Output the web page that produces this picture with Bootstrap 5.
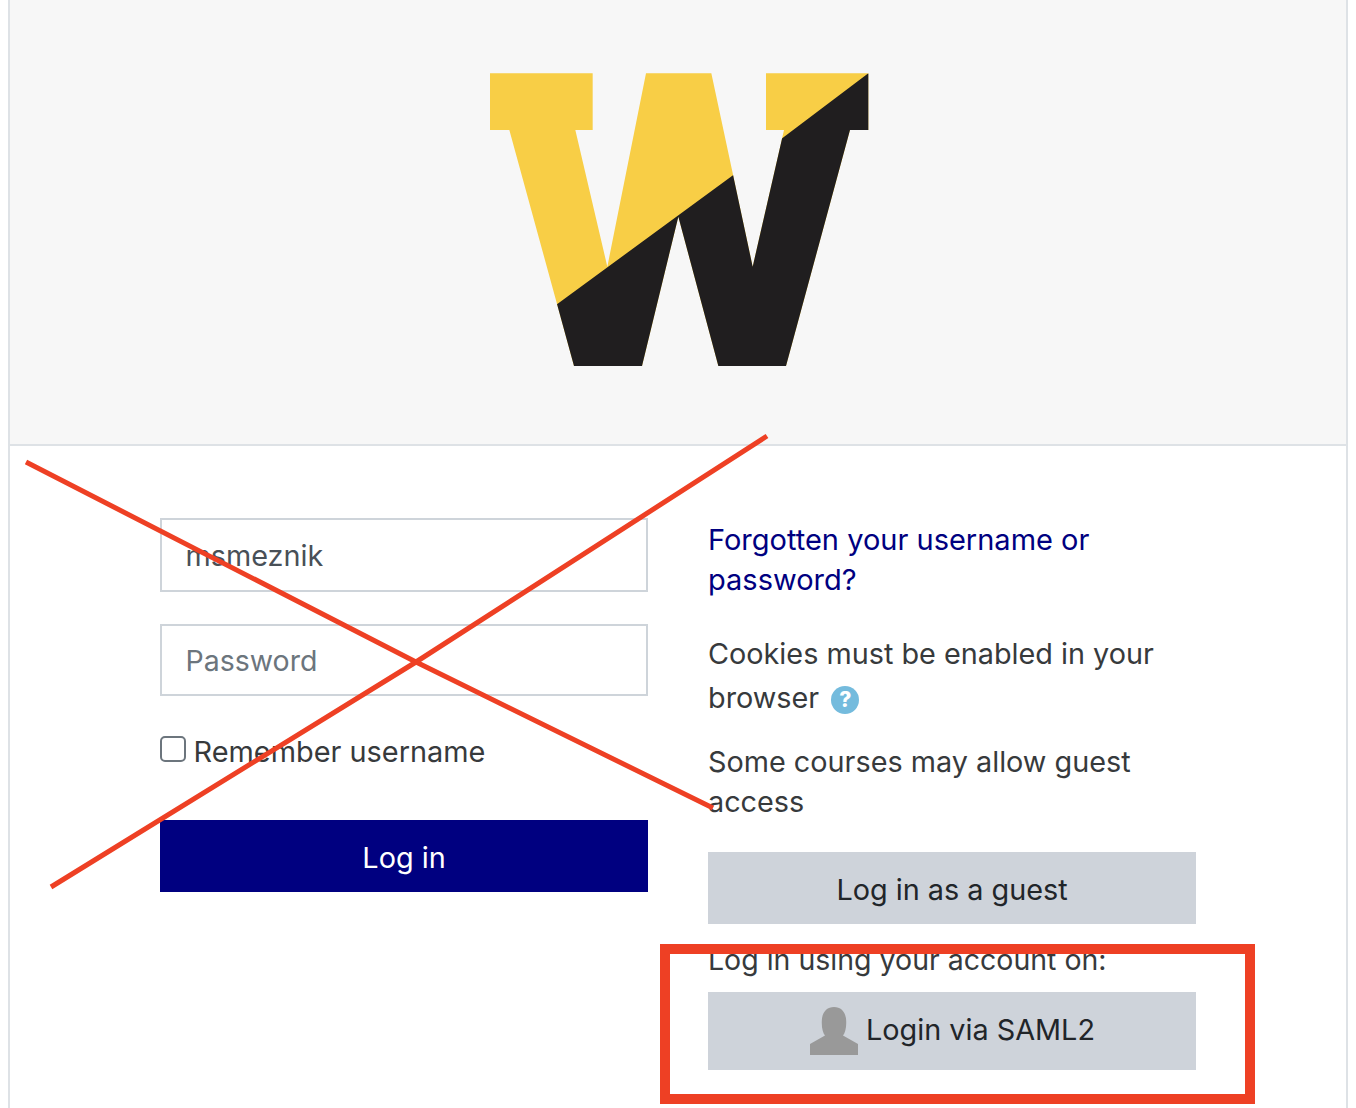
<!DOCTYPE html>
<html>
<head>
    <meta charset="UTF-8">
    <title>Log in</title>
    <link rel="stylesheet" href="https://cdn.jsdelivr.net/npm/bootstrap@5.3.3/dist/css/bootstrap.min.css">
    <style>
        html, body {
            height: 1108px;
            overflow: hidden;
        }
        body {
            position: relative;
            font-family: Inter, "Liberation Sans", sans-serif;
            font-size: 28.8px;
            line-height: 40px;
            color: #373a3c;
        }
        .login-frame {
            margin: 0 8px;
            height: 1108px;
            border-left: 2px solid #dee2e6;
            border-right: 2px solid #dee2e6;
        }
        .login-head {
            height: 446px;
            padding: 50px 0 0 4px;
            background: #f7f7f7;
            border-bottom: 2px solid #dee2e6;
        }
        .login-body {
            padding-left: 150px;
            gap: 60px;
        }
        .login-col {
            width: 488px;
        }
        .left-col {
            padding-top: 72px;
        }
        .right-col {
            padding-top: 74px;
        }
        .login-field.form-control {
            height: 74px;
            padding: 1px 23.500px 0;
            font-size: 28.800px;
            color: #495057;
            background: #fff;
            border: 2px solid #ced4da;
            border-radius: 0;
        }
        .login-field + .login-field {
            height: 72px;
            margin-top: 32px;
        }
        .login-field.form-control::placeholder {
            font-size: 28.500px;
            color: #6c757d;
            opacity: 1;
        }
        .remember-row {
            margin-top: 36px;
            gap: 7.500px;
        }
        .remember-row label {
            font-size: 28.900px;
        }
        .remember-row .form-check-input {
            width: 26px;
            height: 26px;
            margin: -6px 0 0;
            border: 2px solid #6c757d;
            border-radius: 5px;
        }
        .wide-btn.btn {
            display: block;
            width: 100%;
            height: 72px;
            padding: 3px 0 0;
            font-size: 28.800px;
            line-height: 70px;
            border: 0;
            border-radius: 0;
        }
        .wide-btn.btn-login {
            margin-top: 48px;
            color: #fff;
            background: #000080;
        }
        .btn-login:hover {
            color: #fff;
            background: #000080;
        }
        .wide-btn.btn-grey {
            margin-top: 30px;
            color: #212529;
            background: #ced3da;
        }
        .forgot-link {
            display: block;
            font-size: 29px;
            color: #000080;
            text-decoration: none;
        }
        .cookie-text {
            margin: 32px 0 0;
            line-height: 44px;
        }
        .guest-text {
            margin: 22px 0 0;
        }
        .help-mark {
            display: inline-flex;
            width: 28px;
            height: 28px;
            margin-left: 4px;
            font-size: 21px;
            font-weight: 800;
            line-height: 1;
            color: #fff;
            background: #74bbdd;
            vertical-align: 1px;
        }
        .using-text {
            margin-top: 16px;
            font-size: 28.500px;
        }
        .wide-btn.btn-grey.saml-btn {
            height: 78px;
            margin-top: 12px;
            padding: 0 0 2px 1px;
            gap: 8px;
        }
        .saml-btn svg {
            margin-top: 2px;
        }
        .mark-layer {
            position: absolute;
            top: 0;
            left: 0;
            pointer-events: none;
        }
    </style>
</head>
<body>
    <div class="login-frame">
        <div class="login-head">
            <svg class="d-block mx-auto" width="420" height="340" viewBox="0 0 1260 1020">
                <defs>
                    <clipPath id="lowerHalf">
                        <polygon points="262,762 790,375 1195,70 1260,70 1260,1020 0,1020 0,762"/>
                    </clipPath>
                </defs>
                <polygon fill="#f8ce46" points="60,70 368,70 368,240 316,240 412,650 528,70 724,70 848,650 942,240 888,240 888,70 1195,70 1195,240 1140,240 948,948 745,948 625,500 516,948 312,948 118,240 60,240"/>
                <polygon fill="#201e1f" clip-path="url(#lowerHalf)" points="60,70 368,70 368,240 316,240 412,650 528,70 724,70 848,650 942,240 888,240 888,70 1195,70 1195,240 1140,240 948,948 745,948 625,500 516,948 312,948 118,240 60,240"/>
            </svg>
        </div>
        <div class="login-body d-flex">
            <form class="login-col left-col">
                <input type="text" class="form-control login-field" value="msmeznik">
                <input type="password" class="form-control login-field" placeholder="Password">
                <div class="remember-row d-flex align-items-center">
                    <input type="checkbox" class="form-check-input" id="rememberme">
                    <label for="rememberme">Remember username</label>
                </div>
                <button type="button" class="btn wide-btn btn-login">Log in</button>
            </form>
            <div class="login-col right-col">
                <a href="#" class="forgot-link">Forgotten your username or password?</a>
                <p class="cookie-text">Cookies must be enabled in your browser <span class="help-mark rounded-circle align-items-center justify-content-center">?</span></p>
                <p class="guest-text">Some courses may allow guest access</p>
                <button type="button" class="btn wide-btn btn-grey">Log in as a guest</button>
                <div class="using-text">Log in using your account on:</div>
                <a href="#" class="btn wide-btn btn-grey saml-btn d-flex align-items-center justify-content-center">
                    <svg width="48" height="48" viewBox="0 0 48 48"><path fill="#999" d="M0 48V37L15 28.500C13 26 11.500 21 11.800 14C12 5 17 0 24 0C31 0 36 5 36.200 14C36.500 21 35 26 33 28.500L48 37V48Z"/></svg>
                    <span>Login via SAML2</span>
                </a>
            </div>
        </div>
    </div>
    <!-- red review marks drawn over the page, hand drawn so not quite straight -->
    <svg class="mark-layer" width="1356" height="1108">
        <polyline points="26,462 416,662 713,808" fill="none" stroke="#ee4024" stroke-width="5"/>
        <polyline points="51,887 416,662 767,436" fill="none" stroke="#ee4024" stroke-width="5"/>
        <rect x="665" y="949" width="585" height="150" fill="none" stroke="#ee4024" stroke-width="10"/>
    </svg>
    <script src="https://cdn.jsdelivr.net/npm/bootstrap@5.3.3/dist/js/bootstrap.bundle.min.js"></script>
</body>
</html>
